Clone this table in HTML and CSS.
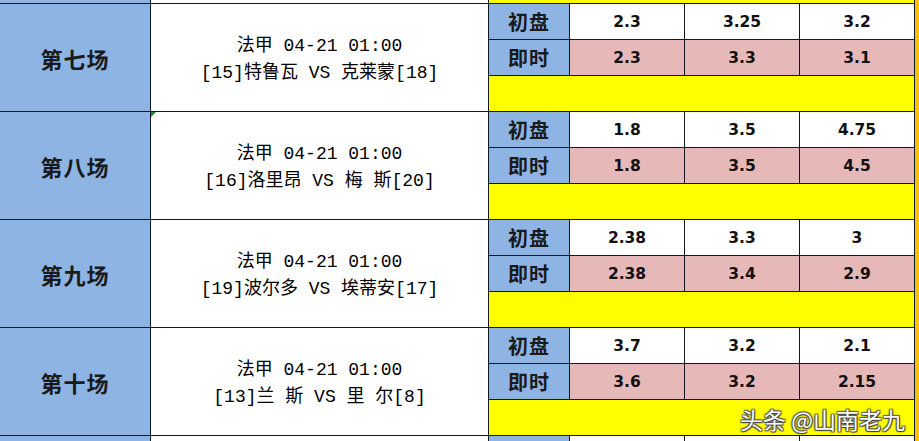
FILE: index.html
```html
<!DOCTYPE html>
<html lang="zh">
<head>
<meta charset="utf-8">
<title>法甲赔率</title>
<link rel="stylesheet" href="styles.css">
</head>
<body>
<div class="sheet">
  <div class="grid">
    <div class="c blue"></div>
    <div class="c white"></div>
    <div class="c yellow span4"></div>

    <div class="c blue game r3">第七场</div>
    <div class="c white match r3"><div>法甲 04-21 01:00</div><div>[15]特鲁瓦 VS 克莱蒙[18]</div></div>
    <div class="c blue lab">初盘</div>
    <div class="c white num">2.3</div>
    <div class="c white num">3.25</div>
    <div class="c white num">3.2</div>
    <div class="c blue lab">即时</div>
    <div class="c pink num">2.3</div>
    <div class="c pink num">3.3</div>
    <div class="c pink num">3.1</div>
    <div class="c yellow span4"></div>

    <div class="c blue game r3">第八场</div>
    <div class="c white match r3 flag"><div>法甲 04-21 01:00</div><div>[16]洛里昂 VS 梅 斯[20]</div></div>
    <div class="c blue lab">初盘</div>
    <div class="c white num">1.8</div>
    <div class="c white num">3.5</div>
    <div class="c white num">4.75</div>
    <div class="c blue lab">即时</div>
    <div class="c pink num">1.8</div>
    <div class="c pink num">3.5</div>
    <div class="c pink num">4.5</div>
    <div class="c yellow span4"></div>

    <div class="c blue game r3">第九场</div>
    <div class="c white match r3"><div>法甲 04-21 01:00</div><div>[19]波尔多 VS 埃蒂安[17]</div></div>
    <div class="c blue lab">初盘</div>
    <div class="c white num">2.38</div>
    <div class="c white num">3.3</div>
    <div class="c white num">3</div>
    <div class="c blue lab">即时</div>
    <div class="c pink num">2.38</div>
    <div class="c pink num">3.4</div>
    <div class="c pink num">2.9</div>
    <div class="c yellow span4"></div>

    <div class="c blue game r3">第十场</div>
    <div class="c white match r3"><div>法甲 04-21 01:00</div><div>[13]兰 斯 VS 里 尔[8]</div></div>
    <div class="c blue lab">初盘</div>
    <div class="c white num">3.7</div>
    <div class="c white num">3.2</div>
    <div class="c white num">2.1</div>
    <div class="c blue lab">即时</div>
    <div class="c pink num">3.6</div>
    <div class="c pink num">3.2</div>
    <div class="c pink num">2.15</div>
    <div class="c yellow span4 mark"><span class="wm">头条 @山南老九</span></div>

    <div class="c blue"></div>
    <div class="c white"></div>
    <div class="c blue"></div>
    <div class="c white"></div>
    <div class="c white"></div>
    <div class="c white"></div>
  </div>
  <div class="edge"></div>
</div>
</body>
</html>
```

FILE: styles.css
```css
html, body {
  margin: 0;
  padding: 0;
  background: #ffffff;
}
.sheet {
  display: flex;
  width: 919px;
  height: 441px;
  overflow: hidden;
}
.grid {
  display: grid;
  grid-template-columns: 150px 337px 80px 114px 114px 114px;
  grid-template-rows: 3px repeat(12, 35px) 5px;
  gap: 1px;
  padding-right: 1px;
  background: #101820;
}
.edge {
  width: 4px;
  background: #ffc000;
}
.c {
  display: flex;
  align-items: center;
  justify-content: center;
  color: #111;
  font-family: "Noto Sans CJK SC", sans-serif;
  position: relative;
}
.blue { background: #8db4e2; }
.white { background: #ffffff; }
.pink { background: #e6b8b7; }
.yellow { background: #ffff00; }
.span4 { grid-column: span 4; }
.r3 { grid-row: span 3; }
.game {
  font-size: 22px;
  font-weight: 700;
  letter-spacing: 1px;
  color: #1a1a1a;
}
.match {
  flex-direction: column;
  font-family: "Liberation Mono", "Noto Sans CJK SC", monospace;
  font-size: 18px;
  line-height: 27px;
  white-space: pre;
  padding-top: 5px;
  color: #000;
}
.lab {
  font-size: 20px;
  font-weight: 700;
  letter-spacing: 1px;
  color: #1a1a1a;
}
.num {
  font-family: "DejaVu Sans", Verdana, sans-serif;
  font-weight: 700;
  font-size: 15.5px;
}
.flag::before {
  content: "";
  position: absolute;
  left: 0;
  top: 0;
  border-top: 5px solid #1e8a3c;
  border-right: 5px solid transparent;
}
.mark {
  justify-content: flex-end;
  padding-right: 9px;
}
.wm {
  font-family: "Noto Sans CJK SC", sans-serif;
  font-size: 23px;
  color: #ffffff;
  padding-top: 2px;
  text-shadow: 0 0 1px #333, 1px 1px 1px #444, -1px -1px 1px #666, 1px -1px 1px #555, -1px 1px 1px #555;
}
```
